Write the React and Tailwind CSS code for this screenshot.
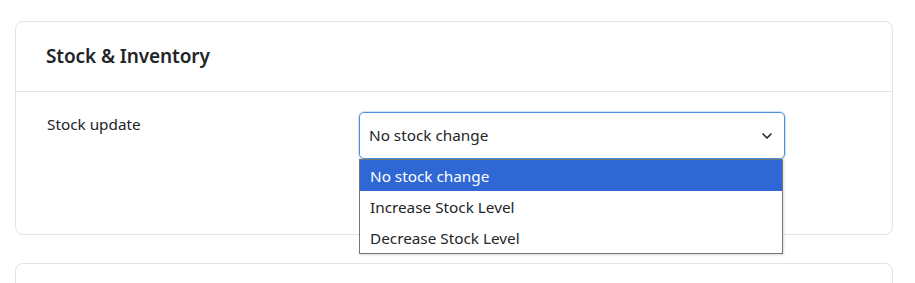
import React from "react";

export default function App() {
  return (
    <div className="w-[915px] h-[283px] overflow-hidden bg-white px-[15px] pt-[21px] text-[#212529]" style={{ fontFamily: '"Noto Sans", "Open Sans", sans-serif' }}>
      <div className="rounded-[8px] border border-[#e3e3e3] w-[878px]">
        <div className="h-[70px] flex items-center px-[30px] border-b border-[#e3e3e3]">
          <h2 className="text-[19px] font-semibold tracking-[-0.1px]">Stock &amp; Inventory</h2>
        </div>
        <div className="h-[142px] flex pt-[20px] px-[31px]">
          <div className="w-[312px] text-[15.3px] pt-[1px]">Stock update</div>
          <div className="relative w-[426px]">
            <div className="h-[47px] rounded-[5px] border border-[#4a90d9] shadow-[0_0_0_1px_rgba(74,144,217,0.25)] flex items-center justify-between pl-[9px] pr-[11px] text-[15.3px]">
              <span>No stock change</span>
              <svg width="12" height="8" viewBox="0 0 12 8" fill="none" stroke="#222" strokeWidth="1.6" strokeLinecap="round" strokeLinejoin="round">
                <path d="M2 2l4 4 4-4" />
              </svg>
            </div>
            <div className="absolute left-0 top-[47px] w-[424px] border border-[#767676] bg-white text-[15.3px] shadow-[1px_1px_2px_rgba(0,0,0,0.15)] z-10">
              <div className="h-[31px] flex items-center pl-[10px] pt-[1px] bg-[#2f68d5] text-white">No stock change</div>
              <div className="h-[31px] flex items-center pl-[10px] pt-[1px]">Increase Stock Level</div>
              <div className="h-[31px] flex items-center pl-[10px] pt-[1px]">Decrease Stock Level</div>
            </div>
          </div>
        </div>
      </div>
      <div className="mt-[28px] rounded-t-[8px] border border-[#e3e3e3] w-[878px] h-[60px]"></div>
    </div>
  );
}
